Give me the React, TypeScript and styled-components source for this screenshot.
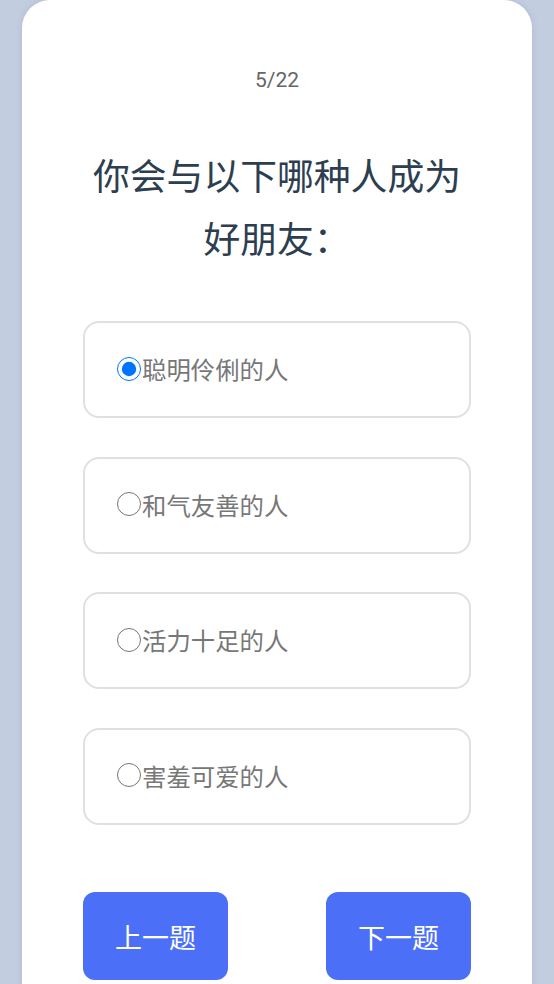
import React, { useState } from "react";
import styled, { createGlobalStyle } from "styled-components";

const GlobalStyle = createGlobalStyle`
  html, body {
    margin: 0;
    padding: 0;
    background: #c2cde0;
  }
  body {
    font-family: "Noto Sans CJK SC", "Noto Sans", sans-serif;
  }
`;

const options = ["聪明伶俐的人", "和气友善的人", "活力十足的人", "害羞可爱的人"];

export default function App() {
    const [picked, setPicked] = useState(0);

    return (
        <>
            <GlobalStyle/>
            <Page>
                <Card>
                    <Counter>5/22</Counter>
                    <Question>你会与以下哪种人成为好朋友：</Question>
                    <OptionList>
                        {options.map((text, i) => (
                            <Option key={text}>
                                <Radio
                                    type="radio"
                                    name="answer"
                                    checked={picked === i}
                                    onChange={() => setPicked(i)}
                                />
                                {text}
                            </Option>
                        ))}
                    </OptionList>
                    <Nav>
                        <NavButton>上一题</NavButton>
                        <NavButton>下一题</NavButton>
                    </Nav>
                </Card>
            </Page>
        </>
    )
}

const Page = styled.main`
  min-height: 100vh;
  padding: 0 22px;
  box-sizing: border-box;
`

const Card = styled.section`
  background: #ffffff;
  border-radius: 28px 28px 0 0;
  padding: 66px 61px 40px;
  min-height: 1040px;
  box-sizing: border-box;
  box-shadow: 0 0 6px rgba(120, 135, 165, 0.25);
`

const Counter = styled.div`
  font-family: Roboto, "Noto Sans", sans-serif;
  font-size: 21px;
  line-height: 28px;
  color: #666666;
  text-align: center;
`

const Question = styled.h1`
  margin: 49px -4px 0;
  font-size: 36.8px;
  font-weight: 400;
  line-height: 63px;
  color: #2c3e50;
  text-align: center;
`

const OptionList = styled.div`
  margin-top: 52px;
  display: flex;
  flex-direction: column;
  gap: 38.5px;
`

const Option = styled.label`
  display: flex;
  align-items: center;
  height: 97px;
  box-sizing: border-box;
  padding: 0 0 2px 32px;
  border: 2.5px solid #e0e0e0;
  border-radius: 16px;
  font-size: 24.4px;
  color: #777777;
  cursor: pointer;
`

const Radio = styled.input`
  width: 24px;
  height: 24px;
  margin: 0 1px 0 0;
`

const Nav = styled.div`
  margin-top: 67.5px;
  display: flex;
  justify-content: space-between;
`

const NavButton = styled.button`
  width: 145px;
  height: 88px;
  border: none;
  border-radius: 12px;
  background: #4c6ff8;
  color: #ffffff;
  font-family: "Noto Sans CJK SC", "Noto Sans", sans-serif;
  font-size: 27px;
  cursor: pointer;
`
